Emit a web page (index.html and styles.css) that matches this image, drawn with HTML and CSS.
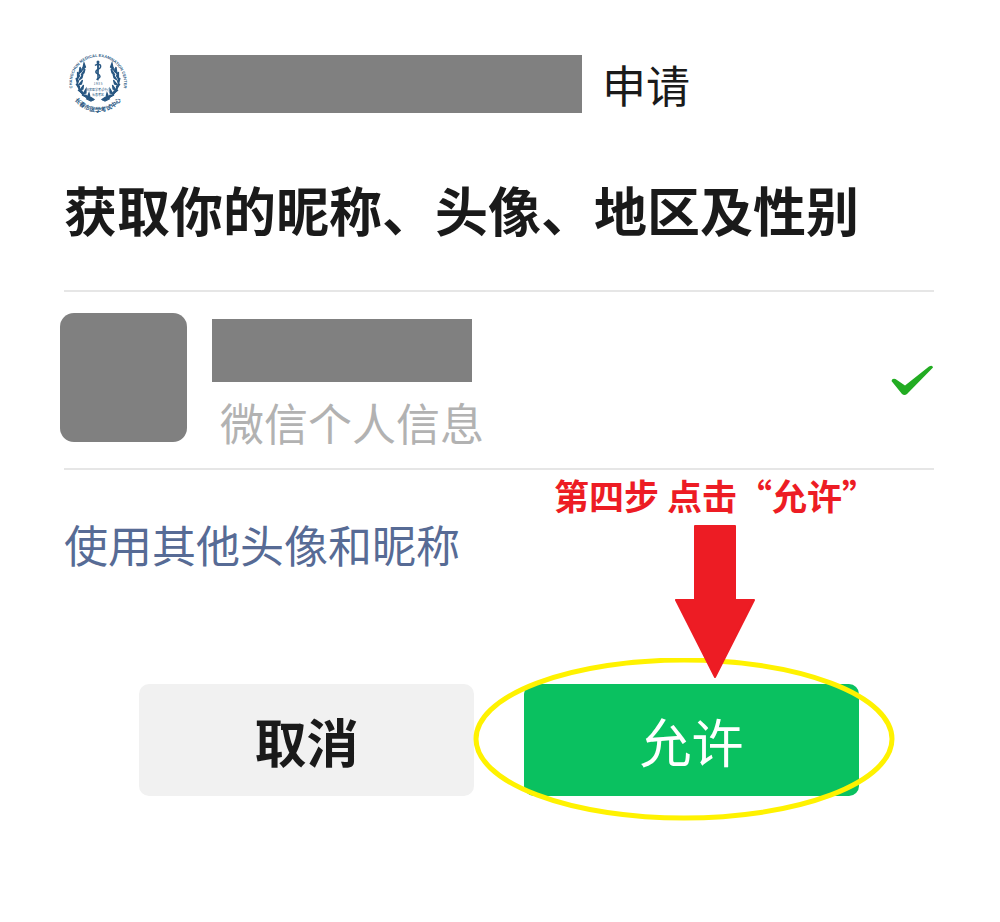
FILE: index.html
```html
<!DOCTYPE html>
<html lang="zh-CN">
<head>
    <meta charset="UTF-8">
    <meta name="viewport" content="width=device-width, initial-scale=1.0">
    <title>微信授权</title>
    <link rel="stylesheet" href="styles.css">
</head>

<body>
    <main class="auth">
        <header class="app">
            <svg class="app-logo" viewBox="0 0 128 128" aria-hidden="true">
                <defs>
                    <path id="ringTop" d="M 21 84 A 52 52 0 1 1 115 84"/>
                    <path id="ringBottom" d="M 13.500 81.800 A 58 58 0 0 0 122.500 81.800"/>
                    <!-- one half of the laurel wreath, mirrored for the other side -->
                    <g id="laurel" transform="translate(0 -4) scale(2)">
                        <path d="M20 16 C13 23 11 35 17 43 C20 47 24 49 30 50" fill="none" stroke="#3c6590" stroke-width="1"/>
                        <path stroke="#285782" stroke-width="1.200" d="M20 13 l1.5 4 l-3 3 z M16 17 l1.5 4.500 l-2.500 2 z M21 19 l-1 4 l-3 2 z M13.500 22 l2 4 l-2 3 z M19 24 l-1 4 l-3 2 z M12 28 l2.500 3 l-1 3 z M18.500 30 l-1 4 l-3 1 z M12 34 l3.500 2 l0 3 z M19.500 35 l-.5 4 l-3 1 z M14 40 l4 1 l1 3 z M22 39 l0 4 l-3 1 z M18 45 l4 0 l2 3 z M25 43 l1 4 l-3 1 z M23 49 l4 -1.500 l3 2 l-3 1.500 z"/>
                    </g>
                </defs>
                <g fill="#285782">
                    <use href="#laurel"/>
                    <use href="#laurel" transform="matrix(-1 0 0 1 136 0)"/>
                    <path d="M66 20 h4 l-.5 34 l-1.500 5 l-1.500 -5 z"/>
                    <circle cx="68" cy="20" r="3"/>
                    <path d="M62 27 C70 21 76 27 72 32 C68 36 62 36 64 41 C66 44 72 44 72 49 C72 53 66 52 66 56" fill="none" stroke="#285782" stroke-width="3"/>
                    <text class="logo-latin"><textPath href="#ringTop" startOffset="50%" text-anchor="middle">CHANGCHUN MEDICAL EXAMINATION CENTER</textPath></text>
                    <text class="logo-han"><textPath href="#ringBottom" startOffset="50%" text-anchor="middle">长春市医学考试中心</textPath></text>
                    <text class="logo-small" x="68" y="66" text-anchor="middle">1 9 8 5</text>
                    <text class="logo-small" x="68" y="77" text-anchor="middle">国家医学考试中心</text>
                    <text class="logo-small" x="68" y="88" text-anchor="middle">长春考区</text>
                </g>
            </svg>
            <span class="app-name"></span>
            <span class="app-action">申请</span>
        </header>

        <h1>获取你的昵称、头像、地区及性别</h1>

        <section class="profile">
            <div class="avatar"></div>
            <div class="profile-text">
                <div class="nickname"></div>
                <p>微信个人信息</p>
            </div>
            <svg class="tick" viewBox="0 0 42 32" aria-hidden="true">
                <path d="M0.500 17 Q1 14 4.500 15 L14 21.500 L38 2.500 Q41.500 .5 42 3.500 L16 30 Q13.500 32 11 30 Z"/>
            </svg>
        </section>

        <a class="other" href="#">使用其他头像和昵称</a>

        <div class="actions">
            <button type="button" class="cancel">取消</button>
            <div class="allow-box">
                <button type="button" class="allow">允许</button>
                <svg class="ring" viewBox="0 0 422 163" aria-hidden="true">
                    <ellipse cx="211" cy="81" rx="208" ry="79"/>
                </svg>
                <div class="callout">
                    <p>第四步 点击“允许”</p>
                    <svg class="arrow" viewBox="0 0 80 153" aria-hidden="true">
                        <path d="M20 1 H60 V75 H79 L40 152 L1 75 H20 Z"/>
                    </svg>
                </div>
            </div>
        </div>
    </main>
</body>
</html>
```
FILE: styles.css
```css
* {
    box-sizing: border-box;
}

body {
    margin: 0;
    background: #fff;
    color: #1a1a1a;
    font-family: "Noto Sans CJK SC", sans-serif;
    font-size: 44px;
    line-height: 64px;
}

h1, p {
    margin: 0;
}

.auth {
    padding: 52px 66px 48px 64px;
}

/* requesting app */
.app {
    display: flex;
    align-items: center;
}
.app-logo {
    width: 64px;
    height: 64px;
    margin-right: 42px;
}
.logo-latin {
    font: bold 8px "Liberation Sans", sans-serif;
}
.logo-han {
    font-size: 12px;
    font-weight: bold;
}
.logo-small {
    font-size: 6px;
}
.app-name {
    width: 412px;
    height: 58px;
    margin-right: 20px;
    background: #808080;
}

h1 {
    margin: 53px 0 41px;
    font-size: 53px;
    font-weight: bold;
    line-height: 80px;
}

/* selected profile */
.profile {
    display: flex;
    align-items: flex-start;
    padding: 21px 1px 26px 0;
    border-top: 2px solid #e6e6e6;
    border-bottom: 2px solid #e6e6e6;
}
.avatar {
    width: 127px;
    height: 129px;
    margin: 0 25px 0 -4px;
    border-radius: 14px;
    background: #808080;
}
.profile-text {
    flex: 1;
    padding-top: 6px;
    color: #b2b2b2;
}
.profile-text p {
    height: 60px;
    padding: 8px 0 0 8px;
}
.nickname {
    width: 260px;
    height: 63px;
    background: #808080;
}
.tick {
    align-self: center;
    width: 42px;
    height: 32px;
    margin-top: 4px;
    fill: #22ac22;
}

.other {
    display: inline-block;
    margin-top: 42px;
    color: #576b95;
    text-decoration: none;
}

/* buttons */
.actions {
    display: flex;
    gap: 50px;
    margin-top: 108px;
    padding: 0 75px;
}
.cancel, .allow-box {
    flex: 1;
}
.allow-box {
    position: relative;
}
button {
    height: 112px;
    padding: 0;
    border: none;
    border-radius: 10px;
    font-family: inherit;
    font-size: 52px;
    cursor: pointer;
}
.cancel {
    background: #f1f1f1;
    color: #1a1a1a;
    font-weight: bold;
}
.allow {
    width: 100%;
    background: #0ac160;
    color: #fff;
}

/* marks drawn over the allow button */
.ring {
    position: absolute;
    top: -26px;
    left: -51px;
    width: 422px;
    height: 163px;
    fill: none;
    stroke: #fff200;
    stroke-width: 5px;
    pointer-events: none;
}
.callout {
    position: absolute;
    bottom: calc(100% + 6px);
    left: 30px;
    display: flex;
    flex-direction: column;
    align-items: center;
    gap: 2px;
    color: #ed1c24;
    font-size: 35px;
    font-weight: bold;
    line-height: 56px;
    white-space: nowrap;
    pointer-events: none;
}
.arrow {
    width: 80px;
    height: 153px;
    fill: #ed1c24;
    stroke: #ed1c24;
    stroke-width: 2px;
    stroke-linejoin: round;
}
```
